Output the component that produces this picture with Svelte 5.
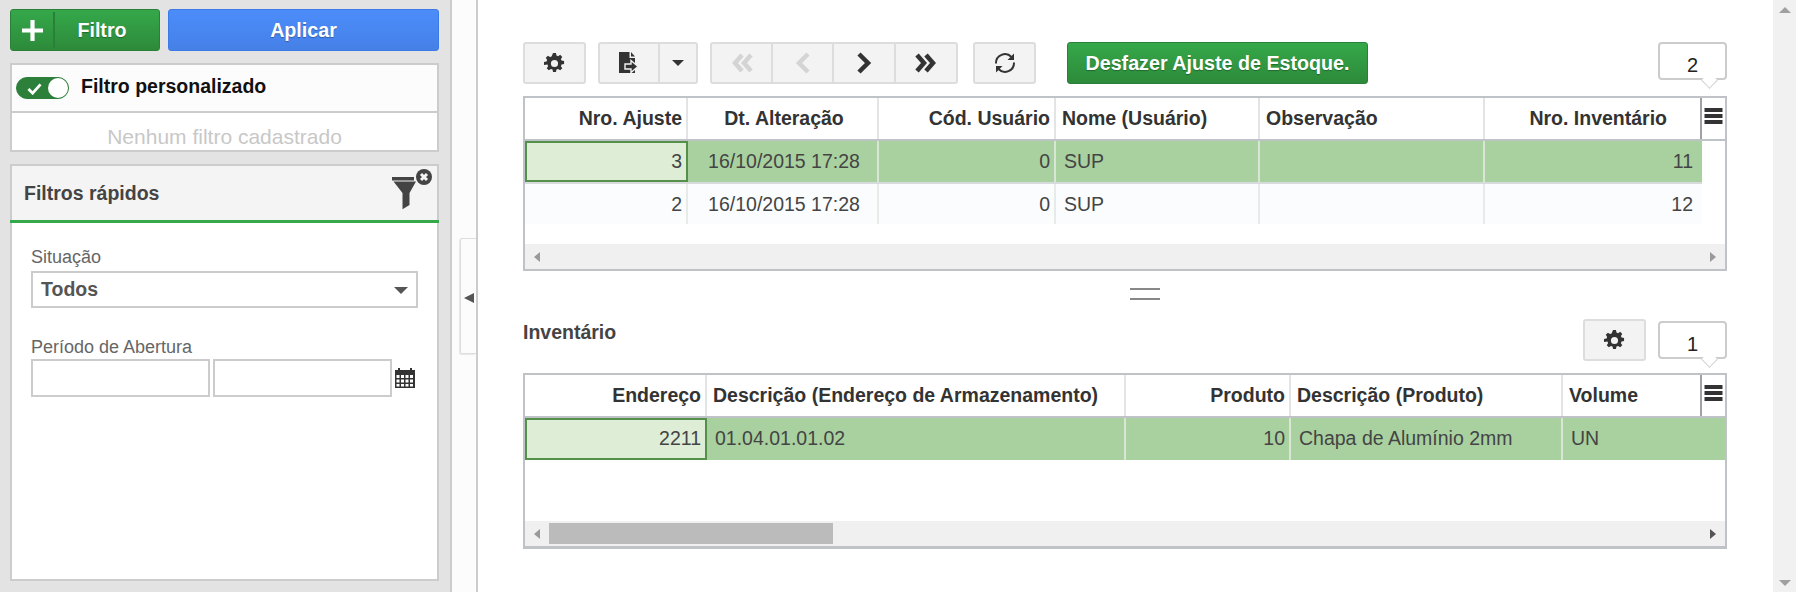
<script>
  const t1 = {
    cols: [163, 191, 177, 204, 225, 217],
    head: [['Nro. Ajuste', 'r'], ['Dt. Alteração', 'ctr'], ['Cód. Usuário', 'r'], ['Nome (Usuário)', 'l'], ['Observação', 'l'], ['Nro. Inventário', 'r']],
    rows: [['3', '16/10/2015 17:28', '0', 'SUP', '', '11'], ['2', '16/10/2015 17:28', '0', 'SUP', '', '12']]
  };
  const t2 = {
    cols: [182, 419, 165, 272, 139],
    head: [['Endereço', 'r'], ['Descrição (Endereço de Armazenamento)', 'l'], ['Produto', 'r'], ['Descrição (Produto)', 'l'], ['Volume', 'l']],
    rows: [['2211', '01.04.01.01.02', '10', 'Chapa de Alumínio 2mm', 'UN']]
  };
  const gearPath = 'M8.6 0h2.8l.5 2.4 1.5.6 2-1.3 2 2-1.3 2 .6 1.5 2.4.5v2.8l-2.4.5-.6 1.5 1.3 2-2 2-2-1.3-1.5.6-.5 2.4H8.6l-.5-2.4-1.5-.6-2 1.3-2-2 1.3-2-.6-1.5L0 11.4V8.6l2.4-.5.6-1.5-1.3-2 2-2 2 1.3 1.5-.6zM10 6.6a3.4 3.4 0 1 0 0 6.8 3.4 3.4 0 0 0 0-6.8z';
</script>

{#snippet gear()}
  <svg class="gear" viewBox="0 0 20 20"><path fill-rule="evenodd" d={gearPath} /></svg>
{/snippet}

{#snippet grid(t, thumb)}
  <div class="grid" class:inv={thumb}>
    <div class="ghead">
      {#each t.cols as w, i}
        <div class="hc {t.head[i][1]}" style="width:{w}px">{t.head[i][0]}</div>
      {/each}
      <div class="hmenu">
        <svg viewBox="0 0 18 16" class="bars"><path d="M0 0h18v4H0zM0 6h18v4H0zM0 12h18v4H0z" /></svg>
      </div>
    </div>
    <div class="gbody">
      {#each t.rows as r, ri}
        <div class="row" class:sel={ri === 0} class:alt={ri === 1}>
          {#each t.cols as w, i}
            <div class="c {t.head[i][1]}" class:cur={ri === 0 && i === 0} style="width:{w}px">{r[i]}</div>
          {/each}
        </div>
      {/each}
    </div>
    <div class="hbar">
      <span class="sarrow left"></span>
      <div class="track">
        {#if thumb}<div class="thumb"></div>{/if}
      </div>
      <span class="sarrow right"></span>
    </div>
  </div>
{/snippet}

<div class="page">
  <aside class="side">
    <div class="actions">
      <button class="btn green filtro">
        <span class="plus"><svg viewBox="0 0 20 20"><path d="M8 0h4v8h8v4h-8v8H8v-8H0V8h8z" /></svg></span>
        <span class="ftxt">Filtro</span>
      </button>
      <button class="btn blue aplicar">Aplicar</button>
    </div>

    <div class="box custom">
      <div class="customhead">
        <span class="switch">
          <svg viewBox="0 0 16 14"><path d="M1.5 7.5 6 12l8.5-9.5" fill="none" stroke="#fff" stroke-width="3" /></svg>
          <span class="knob"></span>
        </span>
        <span class="chtxt">Filtro personalizado</span>
      </div>
      <div class="none">Nenhum filtro cadastrado</div>
    </div>

    <div class="box quick">
      <div class="quickhead">
        <span>Filtros rápidos</span>
        <svg class="funnel" viewBox="0 0 40 43">
          <path d="M0 10h22v3.500H0zM1.500 14.500h22.500l-6.500 11.500v12l-7 4.300V26z" fill="#444" />
          <circle cx="32" cy="10" r="8" fill="#444" />
          <path d="M29 7l6 6M35 7l-6 6" stroke="#f4f4f4" stroke-width="3" />
        </svg>
      </div>
      <div class="quickbody">
        <label class="lbl" for="sit">Situação</label>
        <div class="select" id="sit"><span>Todos</span><i class="caret big"></i></div>
        <label class="lbl second" for="d1">Período de Abertura</label>
        <div class="dates">
          <div class="date" id="d1"></div>
          <div class="date"></div>
          <svg class="cal" viewBox="0 0 20 20">
            <path fill-rule="evenodd" d="M3 0h2v2h10V0h2v2h3v18H0V2h3zM1.500 7v3h3V7zm4.500 0v3h3V7zm4.500 0v3h3V7zm4.500 0v3h3V7zM1.500 11.500v3h3v-3zm4.500 0v3h3v-3zm4.500 0v3h3v-3zm4.500 0v3h3v-3zM1.500 16v2.500h3V16zm4.500 0v2.500h3V16zm4.500 0v2.500h3V16zm4.500 0v2.500h3V16z" />
          </svg>
        </div>
      </div>
    </div>
  </aside>

  <div class="gutter">
    <div class="collapse"><i></i></div>
  </div>

  <main class="main">
    <div class="toolbar">
      <button class="tb w63">{@render gear()}</button>
      <div class="group export">
        <button class="tb g w62">
          <svg class="exp" viewBox="0 0 20 22">
            <path d="M0 0h10.500v6H16v15H0zM12 0l4 4.500h-4z" fill="#333" />
            <path d="M6 12h6V8.500l7 6-7 6V17H6z" fill="#333" stroke="#f3f3f3" stroke-width="1.400" />
          </svg>
        </button>
        <button class="tb g w38"><i class="caret"></i></button>
      </div>
      <div class="group nav">
        <button class="tb g w63 dis"><svg class="chev" viewBox="0 0 24 24"><path d="M12 4l-7 8 7 8M21 4l-7 8 7 8" /></svg></button>
        <button class="tb g w61 dis"><svg class="chev" viewBox="0 0 24 24"><path d="M17 3l-9 9 9 9" /></svg></button>
        <button class="tb g w62"><svg class="chev" viewBox="0 0 24 24"><path d="M7 3l9 9-9 9" /></svg></button>
        <button class="tb g w62"><svg class="chev" viewBox="0 0 24 24"><path d="M3 4l7 8-7 8M12 4l7 8-7 8" /></svg></button>
      </div>
      <button class="tb w63 refresh">
        <svg class="ref" viewBox="0 0 22 22"><path d="M2 11.500A9 9 0 0 1 17.500 5M20 10.500A9 9 0 0 1 4.500 17" fill="none" stroke="#333" stroke-width="2" /><path d="M20 1.500V8h-6.500zM2 20.500V14h6.500z" fill="#333" /></svg>
      </button>
      <button class="btn green undo">Desfazer Ajuste de Estoque.</button>
      <div class="count c2">2</div>
    </div>

    {@render grid(t1, false)}

    <div class="grip"><i></i><i></i></div>

    <div class="sec">
      <div class="title">Inventário</div>
      <button class="tb w63">{@render gear()}</button>
      <div class="count c1">1</div>
    </div>

    {@render grid(t2, true)}
  </main>

  <div class="vbar">
    <i class="up"></i>
    <i class="down"></i>
  </div>
</div>

<style>
  :global(body) { margin: 0; background: #fff; }
  .page {
    display: flex; width: 1796px; height: 592px; overflow: hidden;
    font-family: "Liberation Sans", Arial, sans-serif; color: #333;
  }
  button { font-family: inherit; padding: 0; margin: 0; }

  .side {
    width: 429px; flex: none; background: #e3e3e3; padding: 9px 11px 0 10px;
    border-right: 2px solid #ccc; height: 583px;
  }
  .actions { display: flex; gap: 8px; height: 42px; }
  .btn {
    border-radius: 3px; color: #fff; font-weight: bold; font-size: 19.700px; cursor: pointer;
    text-shadow: 0 1px 1px rgba(0,0,0,.3);
  }
  .green { background: linear-gradient(#35a84a, #2d8a3a); border: 1px solid #2a8038; }
  .blue { background: linear-gradient(#4c8dfb, #4580e6); border: 1px solid #3b7be8; }
  .filtro { width: 150px; display: flex; align-items: center; padding: 0; }
  .plus { width: 42px; height: 36px; border-right: 2px solid #2a8038; display: flex; align-items: center; justify-content: center; }
  .plus svg { width: 21px; height: 21px; fill: #fff; }
  .ftxt { flex: 1; text-align: center; padding-right: 10px; }
  .aplicar { width: 271px; }

  .box { border: 2px solid #ccc; background: #fff; box-sizing: border-box; }
  .custom { margin-top: 12px; height: 89px; }
  .customhead {
    height: 46px; background: #fcfcfc; border-bottom: 2px solid #ccc;
    display: flex; align-items: center; padding-left: 4px;
  }
  .switch {
    width: 53px; height: 22px; box-sizing: border-box; border-radius: 11px; background: #2d8039; border: 1px solid #2d8039;
    display: inline-flex; align-items: center; justify-content: space-between;
  }
  .switch svg { width: 15px; height: 13px; margin-left: 10px; }
  .knob { width: 20px; height: 20px; border-radius: 50%; background: #fff; }
  .chtxt { margin-left: 12px; margin-top: -3px; font-weight: bold; font-size: 19.500px; color: #111; }
  .none { height: 37px; line-height: 47px; overflow: hidden; text-align: center; font-size: 21px; color: #c8c8c8; }

  .quick { margin-top: 12px; height: 417px; }
  .quickhead {
    height: 54px; background: #f4f4f4; padding-left: 12px; padding-right: 5px;
    display: flex; align-items: center; justify-content: space-between;
    font-weight: bold; font-size: 19.500px; color: #444;
  }
  .funnel { width: 40px; height: 43px; margin-top: -9px; }
  .quickbody { border-top: 3px solid #35a94a; margin: 0 -2px; padding: 21px 21px 0; display: flex; flex-direction: column; }
  .lbl { font-size: 18px; color: #666; line-height: 27px; height: 27px; }
  .lbl.second { margin-top: 23px; height: 28px; line-height: 33px; }
  .select {
    width: 387px; height: 37px; box-sizing: border-box; border: 2px solid #ccc; background: #fff;
    display: flex; align-items: center; justify-content: space-between; padding: 0 8px;
    font-weight: bold; font-size: 19.500px; color: #555;
  }
  .caret { width: 0; height: 0; border-left: 6px solid transparent; border-right: 6px solid transparent; border-top: 6px solid #333; display: block; }
  .caret.big { border-left-width: 7px; border-right-width: 7px; border-top-width: 7px; border-top-color: #555; margin-top: 2px; }
  .dates { display: flex; gap: 3px; align-items: center; height: 38px; }
  .date { width: 179px; height: 38px; box-sizing: border-box; border: 2px solid #ccc; background: #fff; flex: none; }
  .cal { width: 20px; height: 20px; fill: #333; }

  .gutter { width: 24px; flex: none; background: #fcfcfc; border-right: 2px solid #ccc; display: flex; flex-direction: column; align-items: flex-end; }
  .collapse {
    margin-top: 238px; width: 15px; height: 114px; background: #fcfcfc; border: 1px solid #ddd; border-right: 0;
    border-radius: 2px 0 0 2px; display: flex; align-items: center; justify-content: center; box-shadow: -1px 1px 1px rgba(0,0,0,.08);
  }
  .collapse i { width: 0; height: 0; border-top: 5px solid transparent; border-bottom: 5px solid transparent; border-right: 10px solid #555; display: block; margin-top: 4px; }

  .main { width: 1204px; flex: none; padding: 42px 0 0; margin-left: 45px; }
  .toolbar { display: flex; height: 54px; align-items: flex-start; }
  .group { display: flex; }
  .tb {
    height: 42px; box-sizing: border-box; background: #f3f3f3; border: 2px solid #ddd; border-radius: 3px;
    display: flex; align-items: center; justify-content: center; cursor: pointer; flex: none;
  }
  .tb.g { border-radius: 0; border-left-width: 0; }
  .group .tb.g:first-child { border-left-width: 2px; border-radius: 3px 0 0 3px; }
  .group .tb.g:last-child { border-radius: 0 3px 3px 0; }
  .w63 { width: 63px; } .w62 { width: 62px; } .w61 { width: 61px; } .w38 { width: 38px; }
  .export { margin-left: 12px; }
  .nav { margin-left: 12px; }
  .refresh { margin-left: 15px; }
  .undo { margin-left: 31px; width: 301px; height: 42px; flex: none; }
  .gear { width: 21px; height: 21px; fill: #333; }
  .exp { width: 20px; height: 22px; }
  .chev { width: 24px; height: 24px; fill: none; stroke: #333; stroke-width: 4.500; }
  .dis .chev { stroke: #d4d4d4; }
  .ref { width: 22px; height: 22px; }

  .count {
    width: 69px; height: 38px; box-sizing: border-box; border: 2px solid #ccc; border-radius: 4px; background: #fff;
    text-align: center; font-size: 20px; color: #222; line-height: 42px; position: relative; flex: none;
  }
  .count::after {
    content: ""; position: absolute; right: 9px; bottom: -9px; width: 12px; height: 12px; background: #fff;
    border-right: 1px solid #ccc; border-bottom: 1px solid #ccc; transform: rotate(45deg) scale(.9);
  }
  .c2 { margin-left: 290px; }
  .c1 { margin-left: 12px; margin-top: 2px; }

  .grid { border: 2px solid #bfc3c8; box-sizing: border-box; width: 1204px; background: #fff; }
  .grid.inv { border-bottom-width: 3px; }
  .ghead { display: flex; height: 41px; border-bottom: 2px solid #bfc3c8; }
  .hc {
    box-sizing: border-box; height: 41px; line-height: 41px; font-weight: bold; font-size: 19.500px; color: #333;
    padding: 0 4px 0 6px; border-right: 2px solid #e2e4e6; white-space: nowrap; overflow: hidden; flex: none;
  }
  .hc:nth-last-child(2) { border-right: 2px solid #9ea2a6; }
  .grid:not(.inv) .hc:nth-last-child(2) { padding-right: 33px; }
  .r { text-align: right; }
  .l { text-align: left; }
  .ctr { text-align: center; }
  .hc.ctr { padding: 0 0 0 3px; }
  .hmenu { flex: 1; display: flex; align-items: flex-start; justify-content: center; padding-top: 10px; }
  .bars { width: 19px; height: 16px; fill: #333; }
  .gbody { height: 103px; overflow: hidden; }
  .row { display: flex; box-sizing: border-box; width: 1177px; height: 43px; border-bottom: 2px solid #d7dbdc; }
  .row.alt { background: #fbfcfe; border-bottom: 0; height: 40px; }
  .row.sel { background: #a9d1a0; }
  .inv .row { width: 100%; height: 42px; border-bottom: 0; }
  .c {
    box-sizing: border-box; font-size: 19.500px; color: #444; padding: 0 8px; line-height: 40px; flex: none;
    border-right: 2px solid #e7ebe7; white-space: nowrap; overflow: hidden;
  }
  .c:last-child { border-right: 0; }
  .c.ctr { padding: 0 0 0 3px; }
  .c.r { padding-right: 4px; }
  .c.r:last-child { padding-right: 9px; }
  .sel .c { border-right-color: #d9e6d6; }
  .c.cur { background: #deedd6; border: 2px solid #54904a; line-height: 36px; padding-right: 4px; }
  .hbar { display: flex; align-items: center; height: 25px; background: #f0f0f0; }
  .track { flex: 1; height: 21px; }
  .thumb { width: 284px; height: 21px; background: #bbb; }
  .sarrow { width: 24px; display: flex; justify-content: center; flex: none; }
  .sarrow::before { content: ""; border-top: 5px solid transparent; border-bottom: 5px solid transparent; }
  .sarrow.left::before { border-right: 6px solid #999; }
  .sarrow.right::before { border-left: 6px solid #999; }
  .inv .sarrow.right::before { border-left-color: #555; }

  .grip { height: 48px; display: flex; flex-direction: column; align-items: center; padding: 17px 0 0 40px; box-sizing: border-box; gap: 8px; }
  .grip i { width: 30px; height: 2px; background: #888; display: block; }

  .sec { display: flex; height: 54px; align-items: flex-start; }
  .title { flex: 1; font-weight: bold; font-size: 19.500px; color: #444; line-height: 22px; margin-top: 2px; }

  .vbar { width: 23px; margin-left: 46px; flex: none; background: #f1f1f1; position: relative; height: 592px; }
  .vbar i { position: absolute; left: 6px; width: 0; height: 0; border-left: 6px solid transparent; border-right: 6px solid transparent; }
  .vbar .up { top: 7px; border-bottom: 6px solid #a0a0a0; }
  .vbar .down { bottom: 6px; border-top: 6px solid #a0a0a0; }
</style>
